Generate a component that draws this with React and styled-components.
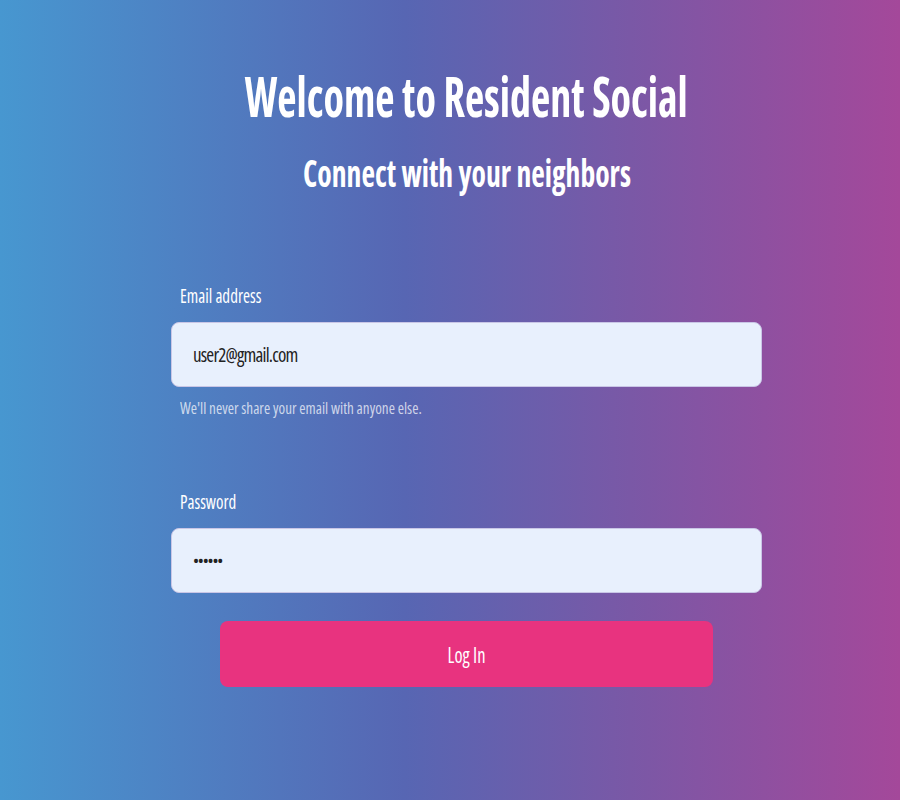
import React from 'react';
import styled, { createGlobalStyle, css } from 'styled-components';

const GlobalStyle = createGlobalStyle`
  html, body {
    margin: 0;
    padding: 0;
  }
  body {
    font-family: "Open Sans", "Noto Sans", sans-serif;
    font-stretch: 75%;
  }
`;

// the reference type is a tall, very narrow face: condensed Open Sans squeezed a bit more
const narrow = (x) => css`
  display: inline-block;
  transform: scaleX(${x});
  white-space: nowrap;
`;

export default function App() {
  return (
    <Page>
      <GlobalStyle />
      <Column>
        <Title>Welcome to Resident Social</Title>
        <Subtitle>Connect with your neighbors</Subtitle>
        <Form onSubmit={(e) => e.preventDefault()}>
          <Field>
            <Label htmlFor="email">Email address</Label>
            <Input id="email" type="email" defaultValue="user2@gmail.com" />
            <Hint>We'll never share your email with anyone else.</Hint>
          </Field>
          <Field $top={72}>
            <Label htmlFor="password">Password</Label>
            <Input id="password" type="password" defaultValue="123456" $secret />
          </Field>
          <Button type="submit">
            <ButtonText>Log In</ButtonText>
          </Button>
        </Form>
      </Column>
    </Page>
  );
}

const Page = styled.div`
  width: 100%;
  min-height: 800px;
  box-sizing: border-box;
  padding-left: 33px;
  background: linear-gradient(to right, #4797d0 0%, #5766b3 45%, #7a58a6 70%, #a4489a 100%);
  display: flex;
  justify-content: center;
`;

const Column = styled.div`
  width: 591px;
  display: flex;
  flex-direction: column;
  align-items: center;
  padding-top: 63px;
`;

const Title = styled.h1`
  ${narrow(0.75)};
  margin: 0;
  color: #fff;
  font-size: 56px;
  font-weight: 700;
  line-height: 64px;
`;

const Subtitle = styled.h2`
  ${narrow(0.8)};
  margin: 24px 0 0;
  color: #fff;
  font-size: 37px;
  font-weight: 700;
  line-height: 44px;
`;

const Form = styled.form`
  width: 100%;
  margin-top: 89px;
  display: flex;
  flex-direction: column;
  align-items: center;
`;

const Field = styled.div`
  width: 100%;
  display: flex;
  flex-direction: column;
  align-items: flex-start;
  margin-top: ${(p) => p.$top || 0}px;
`;

const Label = styled.label`
  ${narrow(0.85)};
  transform-origin: left center;
  color: #fff;
  font-size: 20px;
  line-height: 24px;
  margin-left: 9px;
  margin-bottom: 14px;
`;

const Input = styled.input`
  box-sizing: border-box;
  width: 100%;
  height: 65px;
  padding: 0 21px;
  border: 1px solid #c9c6e6;
  border-radius: 8px;
  background: #e8f0fd;
  color: #222;
  font-family: inherit;
  font-stretch: 75%;
  font-size: ${(p) => (p.$secret ? 16 : 19)}px;
  letter-spacing: ${(p) => (p.$secret ? -1.2 : -0.8)}px;
  outline: none;
`;

const Hint = styled.small`
  ${narrow(0.89)};
  transform-origin: left center;
  color: rgba(255, 255, 255, 0.72);
  font-size: 17px;
  line-height: 20px;
  margin-left: 9px;
  margin-top: 11px;
`;

const Button = styled.button`
  width: 493px;
  height: 66px;
  margin-top: 28px;
  border: none;
  border-radius: 8px;
  background: #e8337f;
  color: #fff;
  font-family: inherit;
  font-stretch: 75%;
  cursor: pointer;
`;

const ButtonText = styled.span`
  ${narrow(0.84)};
  font-size: 22px;
  line-height: 28px;
`;
